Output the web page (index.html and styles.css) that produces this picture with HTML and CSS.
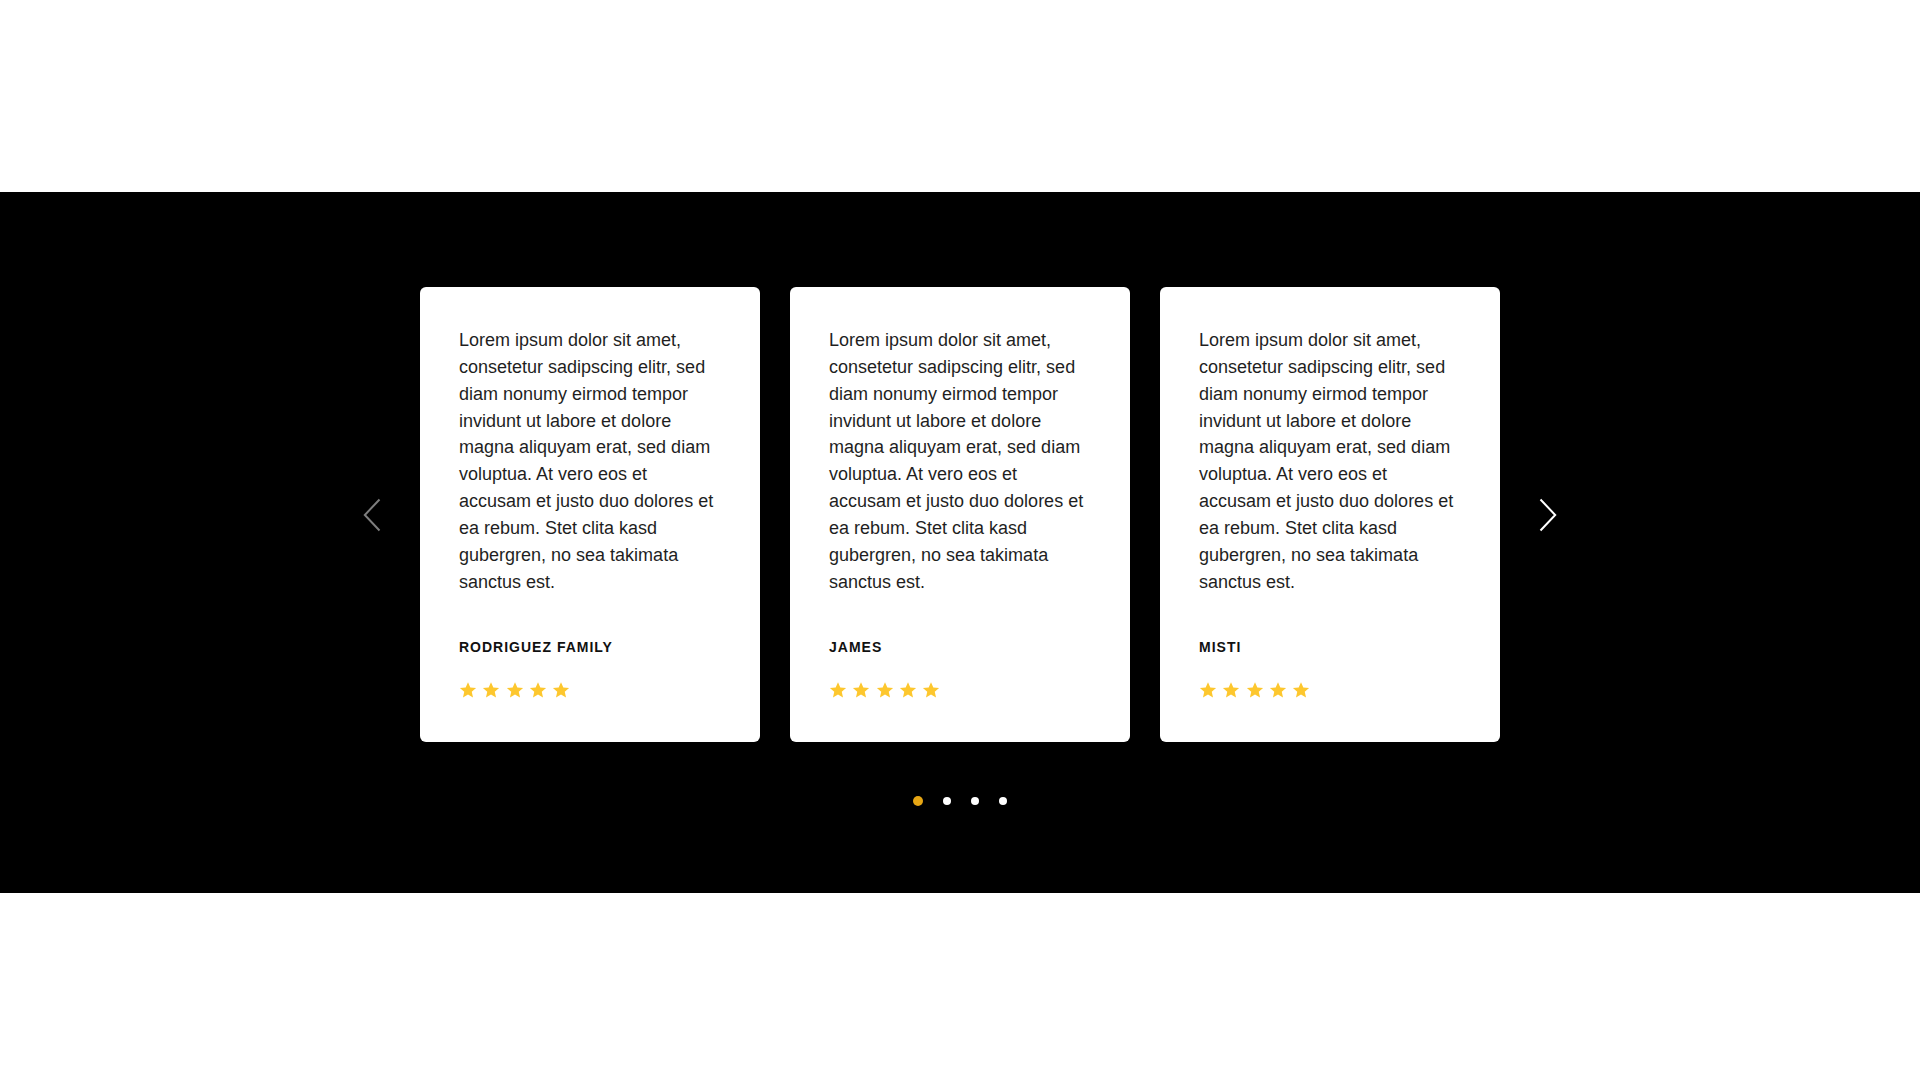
FILE: index.html
```html
<!DOCTYPE html>
<html lang="en">
<head>
<meta charset="utf-8">
<title>Testimonials</title>
<link rel="stylesheet" href="styles.css">
</head>
<body>
<div class="top-space"></div>
<section class="testimonials">
  <div class="slider">
    <button class="arrow arrow-prev" aria-label="Previous">
      <svg width="18" height="34" viewBox="0 0 18 34"><polyline points="16.5,1.5 1.8,17 16.5,32.5" fill="none" stroke="#7d7d7d" stroke-width="2"/></svg>
    </button>
    <div class="cards">
      <article class="card">
        <p class="quote">Lorem ipsum dolor sit amet, consetetur sadipscing elitr, sed diam nonumy eirmod tempor invidunt ut labore et dolore magna aliquyam erat, sed diam voluptua. At vero eos et accusam et justo duo dolores et ea rebum. Stet clita kasd gubergren, no sea takimata sanctus est.</p>
        <h3 class="name">RODRIGUEZ FAMILY</h3>
        <div class="stars">
          <svg viewBox="0 0 24 24"><polygon points="12,1.5 15.1,8.6 22.8,9.3 17,14.4 18.7,22 12,18 5.3,22 7,14.4 1.2,9.3 8.9,8.6"/></svg>
          <svg viewBox="0 0 24 24"><polygon points="12,1.5 15.1,8.6 22.8,9.3 17,14.4 18.7,22 12,18 5.3,22 7,14.4 1.2,9.3 8.9,8.6"/></svg>
          <svg viewBox="0 0 24 24"><polygon points="12,1.5 15.1,8.6 22.8,9.3 17,14.4 18.7,22 12,18 5.3,22 7,14.4 1.2,9.3 8.9,8.6"/></svg>
          <svg viewBox="0 0 24 24"><polygon points="12,1.5 15.1,8.6 22.8,9.3 17,14.4 18.7,22 12,18 5.3,22 7,14.4 1.2,9.3 8.9,8.6"/></svg>
          <svg viewBox="0 0 24 24"><polygon points="12,1.5 15.1,8.6 22.8,9.3 17,14.4 18.7,22 12,18 5.3,22 7,14.4 1.2,9.3 8.9,8.6"/></svg>
        </div>
      </article>
      <article class="card">
        <p class="quote">Lorem ipsum dolor sit amet, consetetur sadipscing elitr, sed diam nonumy eirmod tempor invidunt ut labore et dolore magna aliquyam erat, sed diam voluptua. At vero eos et accusam et justo duo dolores et ea rebum. Stet clita kasd gubergren, no sea takimata sanctus est.</p>
        <h3 class="name">JAMES</h3>
        <div class="stars">
          <svg viewBox="0 0 24 24"><polygon points="12,1.5 15.1,8.6 22.8,9.3 17,14.4 18.7,22 12,18 5.3,22 7,14.4 1.2,9.3 8.9,8.6"/></svg>
          <svg viewBox="0 0 24 24"><polygon points="12,1.5 15.1,8.6 22.8,9.3 17,14.4 18.7,22 12,18 5.3,22 7,14.4 1.2,9.3 8.9,8.6"/></svg>
          <svg viewBox="0 0 24 24"><polygon points="12,1.5 15.1,8.6 22.8,9.3 17,14.4 18.7,22 12,18 5.3,22 7,14.4 1.2,9.3 8.9,8.6"/></svg>
          <svg viewBox="0 0 24 24"><polygon points="12,1.5 15.1,8.6 22.8,9.3 17,14.4 18.7,22 12,18 5.3,22 7,14.4 1.2,9.3 8.9,8.6"/></svg>
          <svg viewBox="0 0 24 24"><polygon points="12,1.5 15.1,8.6 22.8,9.3 17,14.4 18.7,22 12,18 5.3,22 7,14.4 1.2,9.3 8.9,8.6"/></svg>
        </div>
      </article>
      <article class="card">
        <p class="quote">Lorem ipsum dolor sit amet, consetetur sadipscing elitr, sed diam nonumy eirmod tempor invidunt ut labore et dolore magna aliquyam erat, sed diam voluptua. At vero eos et accusam et justo duo dolores et ea rebum. Stet clita kasd gubergren, no sea takimata sanctus est.</p>
        <h3 class="name">MISTI</h3>
        <div class="stars">
          <svg viewBox="0 0 24 24"><polygon points="12,1.5 15.1,8.6 22.8,9.3 17,14.4 18.7,22 12,18 5.3,22 7,14.4 1.2,9.3 8.9,8.6"/></svg>
          <svg viewBox="0 0 24 24"><polygon points="12,1.5 15.1,8.6 22.8,9.3 17,14.4 18.7,22 12,18 5.3,22 7,14.4 1.2,9.3 8.9,8.6"/></svg>
          <svg viewBox="0 0 24 24"><polygon points="12,1.5 15.1,8.6 22.8,9.3 17,14.4 18.7,22 12,18 5.3,22 7,14.4 1.2,9.3 8.9,8.6"/></svg>
          <svg viewBox="0 0 24 24"><polygon points="12,1.5 15.1,8.6 22.8,9.3 17,14.4 18.7,22 12,18 5.3,22 7,14.4 1.2,9.3 8.9,8.6"/></svg>
          <svg viewBox="0 0 24 24"><polygon points="12,1.5 15.1,8.6 22.8,9.3 17,14.4 18.7,22 12,18 5.3,22 7,14.4 1.2,9.3 8.9,8.6"/></svg>
        </div>
      </article>
    </div>
    <button class="arrow arrow-next" aria-label="Next">
      <svg width="18" height="34" viewBox="0 0 18 34"><polyline points="1.5,1.5 16.2,17 1.5,32.5" fill="none" stroke="#ffffff" stroke-width="2"/></svg>
    </button>
  </div>
  <div class="dots">
    <span class="dot dot-active"></span>
    <span class="dot"></span>
    <span class="dot"></span>
    <span class="dot"></span>
  </div>
</section>
</body>
</html>
```

FILE: styles.css
```css
html, body {
  margin: 0;
  padding: 0;
  background: #ffffff;
  font-family: "Liberation Sans", Arial, sans-serif;
}

.top-space {
  height: 192px;
}

.testimonials {
  background: #000000;
  height: 701px;
  box-sizing: border-box;
  padding-top: 95px;
}

.slider {
  display: flex;
  justify-content: center;
  align-items: center;
  gap: 39px;
}

.arrow {
  background: none;
  border: 0;
  padding: 0;
  margin: 0;
  width: 18px;
  height: 34px;
  display: flex;
  cursor: pointer;
}

.cards {
  display: flex;
  gap: 30px;
}

.card {
  width: 340px;
  height: 455px;
  box-sizing: border-box;
  background: #ffffff;
  border-radius: 6px;
  padding: 40px 40px 0 39px;
}

.quote {
  margin: 0;
  font-size: 18px;
  line-height: 26.85px;
  color: #1f1f1f;
}

.name {
  margin: 44px 0 0;
  font-size: 14px;
  line-height: 16px;
  font-weight: 700;
  letter-spacing: 1px;
  color: #111111;
}

.stars {
  display: flex;
  gap: 5.3px;
  margin-top: 26px;
}

.stars svg {
  width: 18px;
  height: 18px;
  fill: #fdc72e;
}

.dots {
  display: flex;
  justify-content: center;
  align-items: center;
  gap: 20px;
  margin-top: 54px;
}

.dot {
  width: 8px;
  height: 8px;
  border-radius: 50%;
  background: #ffffff;
}

.dot-active {
  width: 10px;
  height: 10px;
  background: #e6a614;
}
```
